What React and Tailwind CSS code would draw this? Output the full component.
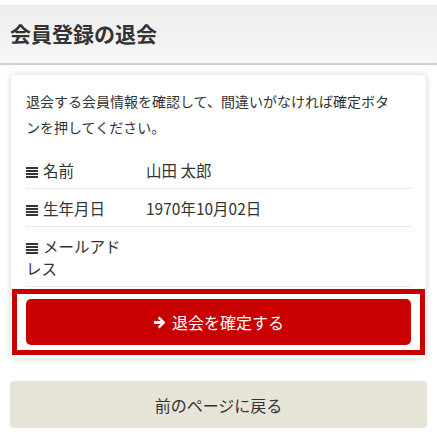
import React from "react";

const font = { fontFamily: '"Noto Sans CJK JP", "Noto Sans", sans-serif' };

const BarsIcon = () => (
  <svg width="12" height="11" viewBox="0 0 12 11" className="inline-block mr-[5px] align-[-1px]">
    <rect x="0" y="0" width="12" height="2" fill="#333" />
    <rect x="0" y="3" width="12" height="2" fill="#333" />
    <rect x="0" y="6" width="12" height="2" fill="#333" />
    <rect x="0" y="9" width="12" height="2" fill="#333" />
  </svg>
);

const ArrowIcon = () => (
  <svg width="13" height="13" viewBox="0 0 14 14" className="inline-block mr-[6px] align-[-1px]">
    <path d="M1 5.3h7.1L5.2 2.4 7 0.6 13.4 7 7 13.4 5.2 11.6 8.1 8.7H1z" fill="#fff" />
  </svg>
);

const rows = [
  { label: "名前", value: "山田 太郎" },
  { label: "生年月日", value: "1970年10月02日" },
  { label: "メールアドレス", value: "" },
];

export default function App() {
  return (
    <div className="w-[437px] h-[448px] bg-white text-[#333]" style={font}>
      <div className="mt-[5px] h-[60px] bg-gradient-to-b from-[#ededed] to-[#f7f7f7] border-b-2 border-[#cfcfcf] flex items-center px-[10px]">
        <h1 className="text-[21px] font-bold text-[#333] leading-none -mt-[2px]">会員登録の退会</h1>
      </div>

      <div className="px-[10px]">
        <div className="mt-[10px] mx-px bg-white rounded-[4px] shadow-[0_0_6px_rgba(0,0,0,0.18)] pb-[3px]">
          <div className="px-[15px] pt-[13px]">
            <p className="text-[14px] leading-[26px] max-w-[372px]">
              退会する会員情報を確認して、間違いがなければ確定ボタンを押してください。
            </p>
            <div className="mt-[11px]">
              {rows.map((r) => (
                <div key={r.label} className="flex pt-[8px] pb-[7px] border-b border-dotted border-[#d8d8d8] text-[15.5px] leading-[22px]">
                  <div className="w-[120px] shrink-0 pr-[12px]">
                    <BarsIcon />
                    {r.label}
                  </div>
                  <div>{r.value}</div>
                </div>
              ))}
            </div>
          </div>
          <div className="mt-[2px] mx-px border-[5px] border-[#c80000] px-[9px] py-[5px]">
            <button className="w-full h-[46px] bg-[#c80000] rounded-[5px] text-white text-[16px] flex items-center justify-center">
              <ArrowIcon />
              退会を確定する
            </button>
          </div>
        </div>

        <button className="mt-[23px] w-full h-[47px] bg-[#e6e3d7] rounded-[4px] text-[16px] text-[#333] flex items-center justify-center">
          前のページに戻る
        </button>
      </div>
    </div>
  );
}
